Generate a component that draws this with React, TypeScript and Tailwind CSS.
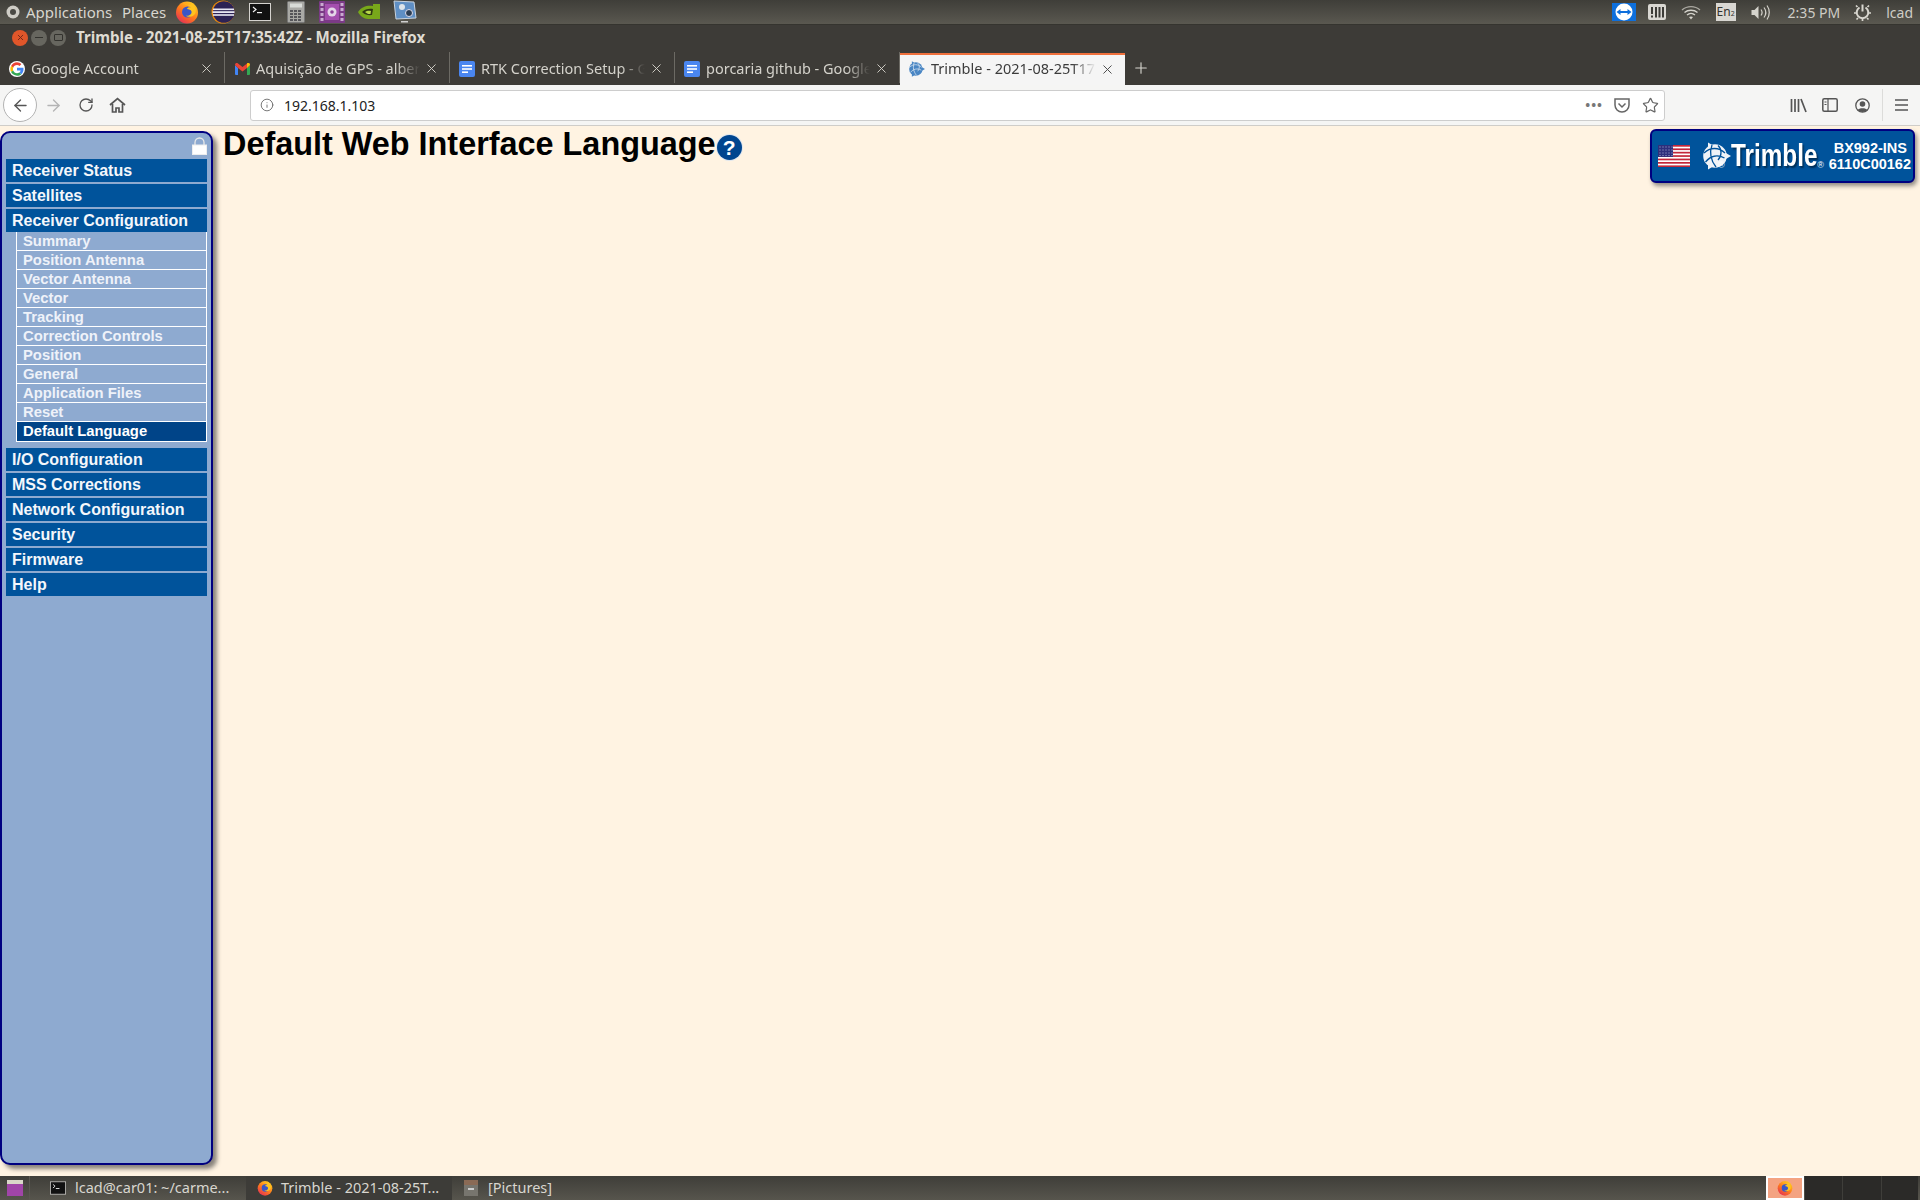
import React from "react";
import { X, Plus, ArrowLeft, ArrowRight, RotateCw, Info, Star } from "lucide-react";

const FirefoxIcon = ({ size = 24 }: { size?: number }) => (
  <svg width={size} height={size} viewBox="0 0 24 24">
    <defs>
      <linearGradient id="ffo" x1="0.8" y1="0" x2="0.1" y2="1">
        <stop offset="0" stopColor="#ffd020" />
        <stop offset="0.5" stopColor="#ff7a1c" />
        <stop offset="1" stopColor="#e0245e" />
      </linearGradient>
    </defs>
    <circle cx="12" cy="12.500" r="11" fill="url(#ffo)" />
    <circle cx="12.500" cy="12" r="5.500" fill="#3a56c8" />
    <path d="M8 3c2 2.500 6 1.500 8 4.500-2-.5-3.500 0-4 1.500 1.500.5 4 .5 4.500 2.500.5 3-3 5-6 4 2 2 7 2 9.500-1.500C22 11 20.500 5 16 2.500 18 6 12 5.500 8 3z" fill="#ffc31f" />
  </svg>
);

const EclipseIcon = () => (
  <svg width="24" height="24" viewBox="0 0 24 24">
    <circle cx="12" cy="12" r="11.500" fill="#e8890c" />
    <circle cx="12.800" cy="12" r="10.800" fill="#2c2255" />
    <rect x="2" y="8.500" width="21" height="1.600" fill="#e6e6f2" />
    <rect x="1.500" y="11.200" width="22" height="1.800" fill="#e6e6f2" />
    <rect x="2" y="14.200" width="21" height="1.600" fill="#e6e6f2" />
  </svg>
);

const TerminalIcon = ({ size = 22 }: { size?: number }) => (
  <svg width={size} height={size} viewBox="0 0 22 22">
    <rect x="0.500" y="2.500" width="21" height="17" fill="#111" stroke="#d5d3cf" />
    <path d="M4 6l3 2.500-3 2.500" fill="none" stroke="#eee" strokeWidth="1.200" />
    <rect x="8" y="11" width="5" height="1.200" fill="#eee" />
  </svg>
);

const CalcIcon = () => (
  <svg width="18" height="22" viewBox="0 0 18 22">
    <rect x="0.500" y="0.500" width="17" height="21" rx="1" fill="#a9a9a5" stroke="#777" />
    <rect x="3" y="2.500" width="12" height="4" fill="#d9dcd8" />
    {[9, 12, 15, 18].map((y) =>
      [3, 7, 11].map((x) => <rect key={`${x}-${y}`} x={x} y={y} width="3" height="2" fill="#56565a" />),
    )}
  </svg>
);

const MediaIcon = () => (
  <svg width="26" height="22" viewBox="0 0 26 22">
    <rect width="26" height="22" rx="1" fill="#7b3a86" />
    <rect x="6" y="3" width="14" height="16" fill="#a44fae" />
    <circle cx="13" cy="11" r="4.500" fill="#e4d7e8" />
    <circle cx="13" cy="11" r="1.800" fill="#8c3f97" />
    {[2, 7, 12, 17].map((y) => (
      <rect key={y} x="1.500" y={y} width="3" height="3" fill="#c9a9d0" />
    ))}
    {[2, 7, 12, 17].map((y) => (
      <rect key={y} x="21.500" y={y} width="3" height="3" fill="#c9a9d0" />
    ))}
  </svg>
);

const NvidiaIcon = () => (
  <svg width="24" height="20" viewBox="0 0 24 20">
    <path d="M1 10c4-6 10-7 15-6v-2h7v15H11c-4 0-8-3-10-7z" fill="#78a81a" />
    <path d="M5 10c3-3 7-3.500 11-3l-1 6c-3 .5-7 0-10-3z" fill="#2f3a12" />
    <path d="M8 10c2-1.500 4-1.500 6-1l-.5 3c-2 .3-4-.5-5.500-2z" fill="#b7d94a" />
  </svg>
);

const SettingsMonitorIcon = () => (
  <svg width="24" height="24" viewBox="0 0 24 24">
    <path d="M1 1l20 1 2 16-20 1z" fill="#5f8fc4" stroke="#c9d3de" />
    <circle cx="9" cy="7" r="3" fill="#dde4ea" />
    <circle cx="16" cy="13" r="3.500" fill="#2b3d52" stroke="#dde" />
    <rect x="8" y="21" width="7" height="1.500" fill="#cfcfcf" />
  </svg>
);

const GoogleIcon = () => (
  <svg width="16" height="16" viewBox="0 0 48 48">
    <circle cx="24" cy="24" r="24" fill="#fff" />
    <path fill="#ea4335" d="M24 12c3 0 5.500 1 7.500 2.900l5.500-5.500C33.600 6.200 29.200 4 24 4 16.200 4 9.500 8.500 6.200 15l6.400 5C14.200 15.300 18.700 12 24 12z" />
    <path fill="#4285f4" d="M43.500 24.500c0-1.500-.1-2.800-.4-4.200H24v8h11c-.5 2.600-2 4.800-4.200 6.200l6.300 4.900c3.900-3.500 6.400-8.800 6.400-14.900z" />
    <path fill="#fbbc05" d="M12.600 28.300c-.5-1.300-.7-2.800-.7-4.300s.2-3 .7-4.300l-6.400-5C4.800 17.500 4 20.600 4 24s.8 6.500 2.200 9.300z" />
    <path fill="#34a853" d="M24 44c5.200 0 9.700-1.700 13-4.600l-6.300-4.900c-1.800 1.200-4 1.900-6.700 1.900-5.300 0-9.800-3.500-11.400-8.200l-6.400 5C9.500 39.500 16.200 44 24 44z" />
  </svg>
);

const GmailIcon = () => (
  <svg width="15" height="12" viewBox="0 0 15 12">
    <path d="M0 2v9a1 1 0 001 1h2V5z" fill="#4285f4" />
    <path d="M15 2v9a1 1 0 01-1 1h-2V5z" fill="#34a853" />
    <path d="M0 2c0-2 2-2.500 3-1.500L7.500 4 12 .5c1-1 3-.5 3 1.500l-3 3-4.500 3.500L3 5z" fill="#ea4335" />
    <path d="M12 .5c1-1 3-.5 3 1.500l-3 3z" fill="#fbbc05" />
  </svg>
);

const DocsIcon = () => (
  <svg width="16" height="16" viewBox="0 0 16 16">
    <rect width="16" height="16" rx="2" fill="#4a86f0" />
    <rect x="3" y="4" width="10" height="1.600" fill="#fff" />
    <rect x="3" y="7.200" width="10" height="1.600" fill="#fff" />
    <rect x="3" y="10.400" width="6" height="1.600" fill="#fff" />
  </svg>
);

const TrimbleMark = ({ size = 16, color = "#4a86c4", line = "#dbe7f2" }: { size?: number; color?: string; line?: string }) => (
  <svg width={size} height={size} viewBox="0 0 28 28" className="shrink-0">
    <path d="M5 0.500L28 14 5 27.500z" fill={color} />
    <circle cx="12" cy="14" r="11.800" fill={color} />
    <path d="M1 11c6-6 15-6 21 0M2.500 20c5-6 12-8 19-4M9 3c-2.500 7-1.500 15 4 22M15 3.500c4 3.500 4 10.500 0 14.500" fill="none" stroke={line} strokeWidth="1.300" />
  </svg>
);

const TeamViewerIcon = () => (
  <svg width="24" height="18" viewBox="0 0 24 18">
    <rect width="24" height="18" fill="#0e6fdc" />
    <circle cx="12" cy="9" r="8.500" fill="#fff" />
    <path d="M4.500 9l4-3v2h7V6l4 3-4 3v-2h-7v2z" fill="#0e6fdc" />
  </svg>
);

const MeterIcon = () => (
  <svg width="18" height="17" viewBox="0 0 18 17">
    <rect width="18" height="16" rx="2" fill="#d9d7d2" />
    <rect x="3" y="3" width="2" height="7" fill="#3c3b37" />
    <rect x="3" y="11.500" width="2" height="2" fill="#3c3b37" />
    <rect x="7" y="3" width="2" height="10.500" fill="#3c3b37" />
    <rect x="10.500" y="3" width="2" height="10.500" fill="#3c3b37" />
    <rect x="14" y="3" width="2" height="10.500" fill="#3c3b37" />
  </svg>
);

const WifiIcon = () => (
  <svg width="20" height="15" viewBox="0 0 20 15" fill="none" stroke="#d5d3cc" strokeWidth="1.300">
    <path d="M1 5c5-4.500 13-4.500 18 0" opacity="0.700" />
    <path d="M3.500 7.500c3.500-3 9.500-3 13 0" />
    <path d="M6 10c2.300-2 5.700-2 8 0" />
    <path d="M10 14.500l-2-2.500c1.200-.8 2.800-.8 4 0z" fill="#d5d3cc" stroke="none" />
  </svg>
);

const SpeakerIcon = () => (
  <svg width="20" height="17" viewBox="0 0 20 17" fill="none" stroke="#d5d3cc" strokeWidth="1.200">
    <path d="M0.500 6h3l4-4v13l-4-4h-3z" fill="#d5d3cc" stroke="none" />
    <path d="M10 5.500c1.300 1.800 1.300 4.200 0 6M13 3.500c2.200 3 2.200 7 0 10M16 1.500c3 4 3 10 0 14" />
  </svg>
);

// session menu: a power symbol set in a gear
const PowerGearIcon = () => (
  <svg width="17" height="17" viewBox="0 0 17 17" fill="none" stroke="#d9d7d0" strokeWidth="2">
    <path d="M5.500 3.500a5.800 5.800 0 106 0" />
    <path d="M8.500 0.500v7" />
    <path d="M2 1.500l1.500 1.500M15 1.500l-1.500 1.500M0 9h2M15 9h2M2.500 15.500L4 14M14.500 15.500L13 14M8.500 15v2" strokeWidth="1.700" />
  </svg>
);

const HomeIcon = () => (
  <svg width="17" height="16" viewBox="0 0 17 16" fill="none" stroke="#555" strokeWidth="1.700">
    <path d="M1 8l7.500-6.500L16 8" />
    <path d="M3.500 7v8h3.500v-4h3v4h3.500V7" />
  </svg>
);

const LockIcon = () => (
  <svg width="15" height="18" viewBox="0 0 15 18">
    <path d="M3 9V5.500a4.500 4.500 0 019 0V9" fill="none" stroke="#e8e8e8" strokeWidth="1.300" />
    <rect x="0.500" y="8" width="14" height="9.500" fill="#fff" stroke="#eee" />
  </svg>
);

const Flag = () => (
  <svg width="32" height="22" viewBox="0 0 32 22" className="shrink-0">
    <rect width="32" height="22" fill="#fff" />
    {[0, 3.400, 6.800, 10.200, 13.600, 17, 20.400].map((y) => (
      <rect key={y} y={y} width="32" height="1.700" fill="#c4273a" />
    ))}
    <rect width="15" height="11.900" fill="#2d2f7c" />
    {[2, 5, 8, 11, 14].map((x) =>
      [2, 5, 8, 10.500].map((y) => <rect key={`${x}-${y}`} x={x - 0.500} y={y - 0.500} width="1" height="1" fill="#aeb2d8" />),
    )}
  </svg>
);

const tabs = [
  { icon: <GoogleIcon />, title: "Google Account" },
  { icon: <GmailIcon />, title: "Aquisição de GPS - albert" },
  { icon: <DocsIcon />, title: "RTK Correction Setup - G" },
  { icon: <DocsIcon />, title: "porcaria github - Google" },
  { icon: <TrimbleMark />, title: "Trimble - 2021-08-25T17:", active: true },
];

const mainTop = ["Receiver Status", "Satellites", "Receiver Configuration"];
const subItems = [
  "Summary",
  "Position Antenna",
  "Vector Antenna",
  "Vector",
  "Tracking",
  "Correction Controls",
  "Position",
  "General",
  "Application Files",
  "Reset",
  "Default Language",
];
const mainBottom = ["I/O Configuration", "MSS Corrections", "Network Configuration", "Security", "Firmware", "Help"];

const launchers = [
  <FirefoxIcon key="firefox" />,
  <EclipseIcon key="eclipse" />,
  <TerminalIcon key="terminal" />,
  <CalcIcon key="calc" />,
  <MediaIcon key="media" />,
  <NvidiaIcon key="nvidia" />,
  <SettingsMonitorIcon key="settings" />,
];

const MenuItem = ({ label }: { label: string }) => (
  <div className="flex h-[23px] items-center bg-[#00539b] pl-[6px] text-[16px] leading-none font-bold text-[#f4f7fb]">
    {label}
  </div>
);

const TopPanel = () => (
  <div className="flex h-[25px] items-center border-b border-[#35342f] bg-gradient-to-b from-[#3f3e39] to-[#5a5850] font-['Noto_Sans',sans-serif] text-[15px] text-[#d8d6cf]">
    <svg width="14" height="14" viewBox="0 0 14 14" className="ml-[6px]">
      <circle cx="7" cy="7" r="6.500" fill="#cfcdc6" />
      <circle cx="7" cy="7" r="3" fill="#4a4944" />
    </svg>
    <span className="ml-[6px] w-[90px]">Applications</span>
    <span className="ml-[6px] w-[47px]">Places</span>
    <div className="flex items-center">
      {launchers.map((icon) => (
        <span key={icon.key} className="flex w-[36.300px] justify-center">
          {icon}
        </span>
      ))}
    </div>
    <div className="ml-auto flex items-center text-[#cfcdc6]">
      <TeamViewerIcon />
      <span className="ml-[12px]"><MeterIcon /></span>
      <span className="ml-[15px]"><WifiIcon /></span>
      <span className="ml-[15px] flex h-[18px] w-[20px] items-center justify-center bg-[#d9d7d2] text-[12px] leading-none text-[#33322e]">
        En<sub className="text-[7px]">2</sub>
      </span>
      <span className="ml-[15px]"><SpeakerIcon /></span>
      <span className="ml-[17px] text-[14px]">2:35 PM</span>
      <span className="ml-[14px]"><PowerGearIcon /></span>
      <span className="ml-[15px] mr-[7px] text-[14px]">lcad</span>
    </div>
  </div>
);

const TitleBar = () => (
  <div className="flex h-[25px] items-center bg-[#3d3b37] font-['Noto_Sans',sans-serif]">
    <div className="ml-[12px] flex items-center gap-[3px]">
      <span className="flex size-[16px] items-center justify-center rounded-full bg-[#e0562a]">
        <X size={9} strokeWidth={2.500} className="text-[#70281a]" />
      </span>
      <span className="flex size-[16px] items-center justify-center rounded-full bg-[#67665f]">
        <span className="h-px w-[8px] bg-[#33322e]" />
      </span>
      <span className="flex size-[16px] items-center justify-center rounded-full bg-[#67665f]">
        <span className="h-[7px] w-[9px] rounded-[1px] border border-[#33322e]" />
      </span>
    </div>
    <span className="ml-[10px] text-[15.150px] font-bold text-[#dfdbd2]">Trimble - 2021-08-25T17:35:42Z - Mozilla Firefox</span>
  </div>
);

const TabBar = () => (
  <div className="flex h-[35px] items-stretch bg-[#3d3b37] font-['Noto_Sans',sans-serif] text-[14.500px]">
    {tabs.map(({ icon, title, active }) => (
      <div
        key={title}
        className={
          active
            ? "mt-[3px] flex w-[225px] items-center border-t-2 border-[#f0703c] bg-[#f5f5f5] pr-[10px] pb-[2px] pl-[9px] text-[#3c3c3c]"
            : "my-[2px] flex w-[225px] items-center border-r border-[#6c6a64] pt-[2px] pr-[10px] pl-[9px] text-[#d4d2cb]"
        }
      >
        <span className="flex w-[16px] shrink-0 justify-center">{icon}</span>
        <span className="ml-[6px] min-w-0 flex-1 whitespace-nowrap [mask-image:linear-gradient(to_left,transparent,black_24px)]">
          {title}
        </span>
        <X size={15} strokeWidth={1.500} className={active ? "ml-[4px] shrink-0 text-[#444]" : "ml-[4px] shrink-0 text-[#d4d2cb]"} />
      </div>
    ))}
    <span className="ml-[7px] flex items-center">
      <Plus size={18} strokeWidth={1.500} className="text-[#d8d6cf]" />
    </span>
  </div>
);

const NavBar = () => (
  <div className="flex h-[41px] items-center border-b border-[#cfcdc9] bg-[#f5f5f4] font-['Noto_Sans',sans-serif]">
    <span className="ml-[3px] flex size-[34px] items-center justify-center rounded-full border border-[#b3b3b3] bg-white">
      <ArrowLeft size={19} strokeWidth={1.700} className="text-[#555]" />
    </span>
    <ArrowRight size={19} strokeWidth={1.700} className="ml-[7px] text-[#b4b4b4]" />
    <RotateCw size={16} strokeWidth={2} className="ml-[15px] text-[#555]" />
    <span className="ml-[15px] flex"><HomeIcon /></span>
    <div className="ml-[124px] flex h-[31px] w-[1415px] items-center rounded-[3px] border border-[#cdcdcd] bg-white">
      <Info size={14} strokeWidth={1.500} className="ml-[9px] text-[#666]" />
      <span className="ml-[10px] text-[14px] text-[#222]">192.168.1.103</span>
      <span className="ml-auto text-[13px] leading-none font-bold tracking-[1px] text-[#777]">•••</span>
      <svg width="16" height="15" viewBox="0 0 16 15" fill="none" stroke="#666" strokeWidth="1.500" className="ml-[11px]">
        <path d="M1 1h14v6a7 7 0 01-14 0z" />
        <path d="M4.500 5.500L8 9l3.500-3.500" />
      </svg>
      <Star size={17} strokeWidth={1.700} className="mr-[5px] ml-[12px] text-[#666]" />
    </div>
    <div className="ml-auto flex h-[32px] items-center text-[#555]">
      <svg width="17" height="15" viewBox="0 0 17 15" fill="none" stroke="#555" strokeWidth="1.700">
        <path d="M1.500 1v13M5 1v13M8.500 1v13M11 1l5 13" />
      </svg>
      <svg width="16" height="14" viewBox="0 0 16 14" fill="none" stroke="#555" strokeWidth="1.500" className="ml-[15px]">
        <rect x="0.800" y="0.800" width="14.400" height="12.400" rx="1.500" />
        <path d="M6 1v12M2.500 4h2M2.500 6.500h2" strokeWidth="1.200" />
      </svg>
      <svg width="15" height="15" viewBox="0 0 15 15" className="ml-[17px]">
        <circle cx="7.500" cy="7.500" r="6.700" fill="none" stroke="#555" strokeWidth="1.300" />
        <circle cx="7.500" cy="6" r="2.800" fill="#555" />
        <path d="M2.800 12c1-2.500 8.400-2.500 9.400 0a6.500 6.500 0 01-9.400 0z" fill="#555" />
      </svg>
      <span className="mx-[12px] h-[32px] w-px bg-[#dcdcda]" />
      <svg width="13" height="12" viewBox="0 0 13 12" fill="none" stroke="#555" strokeWidth="1.500" className="mr-[12px]">
        <path d="M0 1h13M0 6h13M0 11h13" />
      </svg>
    </div>
  </div>
);

const Sidebar = () => (
  <aside className="mt-[5px] mb-[11px] flex w-[213px] shrink-0 flex-col rounded-[10px] border-2 border-[#000080] bg-[#8eaad0] pt-[4px] font-['Liberation_Sans',sans-serif] shadow-[4px_4px_4px_rgba(40,40,40,0.550)]">
    <div className="flex justify-end pr-[4px]">
      <LockIcon />
    </div>
    <div className="mx-[4px] mt-[4px] flex flex-col gap-[2px]">
      {mainTop.map((label) => (
        <MenuItem key={label} label={label} />
      ))}
    </div>
    <div className="mx-[4px] ml-[14px] flex flex-col border-x border-b border-white">
      {subItems.map((label) => (
        <div
          key={label}
          className={
            label === "Default Language"
              ? "flex h-[19px] items-center bg-[#004488] pl-[6px] text-[14.800px] leading-none font-bold text-white"
              : "flex h-[19px] items-center border-b border-white pl-[6px] text-[14.800px] leading-none font-bold text-[#eef2f9]"
          }
        >
          {label}
        </div>
      ))}
    </div>
    <div className="mx-[4px] mt-[6px] flex flex-col gap-[2px]">
      {mainBottom.map((label) => (
        <MenuItem key={label} label={label} />
      ))}
    </div>
  </aside>
);

const Badge = () => (
  <div className="mt-[3px] mr-[5px] flex h-[54px] w-[265px] items-center rounded-[6px] border-2 border-[#000080] bg-[#00539b] pl-[6px] font-['Liberation_Sans',sans-serif] shadow-[2px_3px_4px_rgba(40,40,40,0.500)]">
    <Flag />
    <span className="ml-[13px] flex"><TrimbleMark size={28} color="#f0f3f7" line="#00539b" /></span>
    <span className="relative w-[86px] shrink-0">
      <span className="inline-block origin-left scale-x-[0.76] text-[32px] leading-none font-bold text-white [text-shadow:2px_2px_2px_rgba(0,0,0,0.450)]">
        Trimble
      </span>
      <span className="absolute top-[22px] right-[-7px] text-[9px] leading-none text-white">®</span>
      <span className="absolute top-[22px] left-[-13px] text-[9px] leading-none text-white">®</span>
    </span>
    <div className="mr-[2px] mb-[1px] ml-auto flex flex-col items-end text-[14.500px] leading-[16px] font-bold text-white">
      <span className="pr-[4px]">BX992-INS</span>
      <span>6110C00162</span>
    </div>
  </div>
);

export default function App() {
  return (
    <div className="flex h-[1200px] w-[1920px] flex-col overflow-hidden bg-[#fff3e2]">
      <TopPanel />
      <TitleBar />
      <TabBar />
      <NavBar />
      <main className="flex min-h-0 flex-1">
        <Sidebar />
        <div className="ml-[10px] flex flex-1 items-start justify-between">
          <div className="flex items-center font-['Liberation_Sans',sans-serif]">
            <h1 className="text-[32.400px] leading-[37px] font-bold text-black">Default Web Interface Language</h1>
            <span className="mt-[5px] ml-[1px] flex size-[25px] items-center justify-center rounded-full bg-[#00458f] text-[21px] leading-none font-bold text-white ring-1 ring-[#dfe6ee]">?</span>
          </div>
          <Badge />
        </div>
      </main>
      <footer className="flex h-[24px] items-stretch bg-gradient-to-b from-[#3f3e39] to-[#57554d] font-['Noto_Sans',sans-serif] text-[14.500px] text-[#d8d6cf]">
        <div className="flex w-[30px] items-center justify-center border-r border-[#5a5851]">
          <svg width="16" height="16" viewBox="0 0 16 16">
            <rect width="16" height="4" fill="#d9d7c8" />
            <rect y="4" width="16" height="12" fill="#a045a8" />
          </svg>
        </div>
        <div className="flex w-[216px] items-center pl-[20px]">
          <TerminalIcon size={16} />
          <span className="ml-[9px]">lcad@car01: ~/carme...</span>
        </div>
        <div className="flex w-[206px] items-center bg-[#3d3c38] pl-[11px]">
          <FirefoxIcon size={16} />
          <span className="ml-[8px]">Trimble - 2021-08-25T...</span>
        </div>
        <div className="flex w-[200px] items-center pl-[12px]">
          <svg width="14" height="16" viewBox="0 0 14 16">
            <rect width="14" height="5" fill="#8a6a55" />
            <rect y="5" width="14" height="11" fill="#77756e" />
            <rect x="4" y="8" width="6" height="2" fill="#ccc" />
          </svg>
          <span className="ml-[10px]">[Pictures]</span>
        </div>
        <div className="mr-[2px] ml-auto flex">
          <div className="flex w-[38px] items-center justify-center border-2 border-white bg-[#f4a382]">
            <FirefoxIcon size={16} />
          </div>
          <div className="ml-px w-[38px] border-r border-[#3f3e3a] bg-[#2b2a28]" />
          <div className="w-[39px] border-r border-[#3f3e3a] bg-[#2b2a28]" />
          <div className="w-[36px] bg-[#2b2a28]" />
        </div>
      </footer>
    </div>
  );
}
